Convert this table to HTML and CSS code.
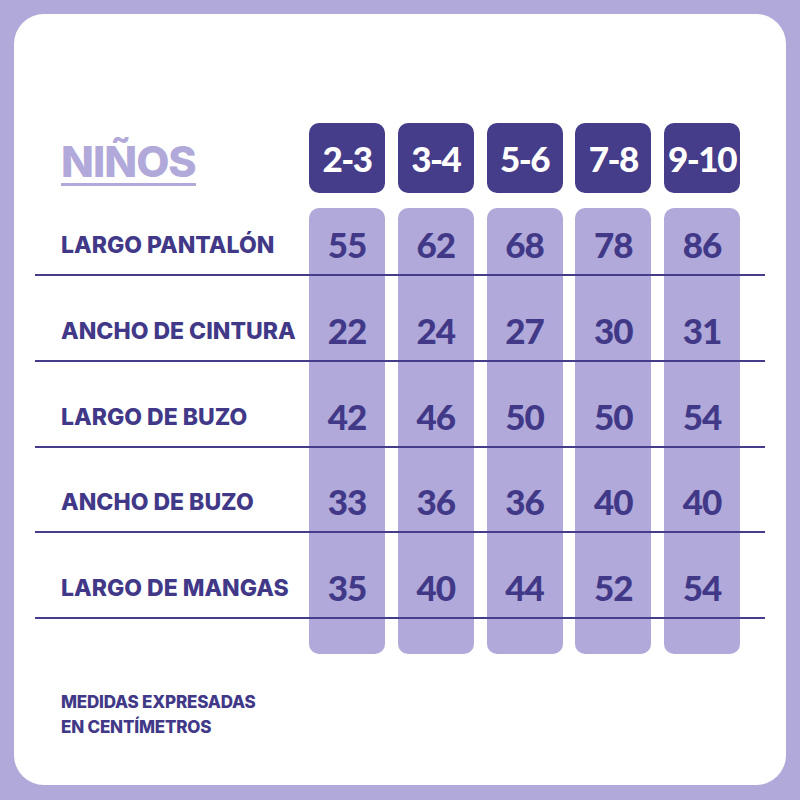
FILE: index.html
```html
<!DOCTYPE html>
<html lang="es">
<head>
<meta charset="utf-8">
<title>Tabla de medidas - Niños</title>
<link rel="stylesheet" href="styles.css">
</head>
<body>
<div class="card">
  <div class="table">
    <div class="title-cell"><span class="title">NIÑOS</span></div>
    <div class="size c1">2-3</div>
    <div class="size c2">3-4</div>
    <div class="size c3">5-6</div>
    <div class="size c4">7-8</div>
    <div class="size c5">9-10</div>

    <div class="colbg c1"></div>
    <div class="colbg c2"></div>
    <div class="colbg c3"></div>
    <div class="colbg c4"></div>
    <div class="colbg c5"></div>

    <div class="line r1"></div>
    <div class="line r2"></div>
    <div class="line r3"></div>
    <div class="line r4"></div>
    <div class="line r5"></div>

    <div class="label r1">LARGO PANTALÓN</div>
    <div class="val r1 c1">55</div><div class="val r1 c2">62</div><div class="val r1 c3">68</div><div class="val r1 c4">78</div><div class="val r1 c5">86</div>

    <div class="label r2">ANCHO DE CINTURA</div>
    <div class="val r2 c1">22</div><div class="val r2 c2">24</div><div class="val r2 c3">27</div><div class="val r2 c4">30</div><div class="val r2 c5">31</div>

    <div class="label r3">LARGO DE BUZO</div>
    <div class="val r3 c1">42</div><div class="val r3 c2">46</div><div class="val r3 c3">50</div><div class="val r3 c4">50</div><div class="val r3 c5">54</div>

    <div class="label r4">ANCHO DE BUZO</div>
    <div class="val r4 c1">33</div><div class="val r4 c2">36</div><div class="val r4 c3">36</div><div class="val r4 c4">40</div><div class="val r4 c5">40</div>

    <div class="label r5">LARGO DE MANGAS</div>
    <div class="val r5 c1">35</div><div class="val r5 c2">40</div><div class="val r5 c3">44</div><div class="val r5 c4">52</div><div class="val r5 c5">54</div>
  </div>
  <p class="note">MEDIDAS EXPRESADAS<br>EN CENTÍMETROS</p>
</div>
</body>
</html>
```

FILE: styles.css
```css
html, body {
  margin: 0;
  padding: 0;
}
body {
  background: #b0a9d9;
  padding: 14px;
  width: 800px;
  height: 800px;
  box-sizing: border-box;
  font-family: "Inter", "Liberation Sans", sans-serif;
  font-weight: 800;
  color: #413988;
}
.card {
  background: #ffffff;
  border-radius: 30px;
  height: 771px;
  box-sizing: border-box;
  padding: 109px 21px 0 21px;
}
.table {
  display: grid;
  grid-template-columns: 261.25px repeat(5, 76px) 1fr;
  column-gap: 12.75px;
  grid-template-rows: 70px 15px 68px 85.75px 85.75px 85.75px 85.75px 35px;
}
.c1 { grid-column: 2; }
.c2 { grid-column: 3; }
.c3 { grid-column: 4; }
.c4 { grid-column: 5; }
.c5 { grid-column: 6; }
.r1 { grid-row: 3; }
.r2 { grid-row: 4; }
.r3 { grid-row: 5; }
.r4 { grid-row: 6; }
.r5 { grid-row: 7; }

.title-cell {
  grid-column: 1;
  grid-row: 1;
  align-self: end;
  padding-left: 26px;
  margin-bottom: 7px;
}
.title {
  display: inline-block;
  font-size: 43px;
  line-height: 42px;
  letter-spacing: -1px;
  color: #b0a9d9;
  border-bottom: 3px solid #b0a9d9;
  padding-bottom: 1px;
}
.size {
  grid-row: 1;
  background: #453c8a;
  border-radius: 10px;
  color: #ffffff;
  font-family: "Lato", "Inter", sans-serif;
  font-weight: 900;
  font-size: 35px;
  display: flex;
  align-items: center;
  justify-content: center;
  letter-spacing: -1.5px;
}
.colbg {
  grid-row: 3 / 9;
  background: #b0a9d9;
  border-radius: 10px;
}
.line {
  grid-column: 1 / -1;
  align-self: end;
  height: 2px;
  background: #453c8a;
}
.label {
  grid-column: 1;
  align-self: end;
  padding-left: 26px;
  font-size: 23px;
  line-height: 26px;
  margin-bottom: 18px;
  white-space: nowrap;
  letter-spacing: 0;
}
.val {
  align-self: end;
  text-align: center;
  font-family: "Lato", "Inter", sans-serif;
  font-weight: 900;
  font-size: 35px;
  line-height: 38px;
  margin-bottom: 13px;
  letter-spacing: -1px;
}
.note {
  margin: 36px 0 0 26px;
  font-size: 17px;
  line-height: 25px;
  letter-spacing: -0.2px;
}
```
